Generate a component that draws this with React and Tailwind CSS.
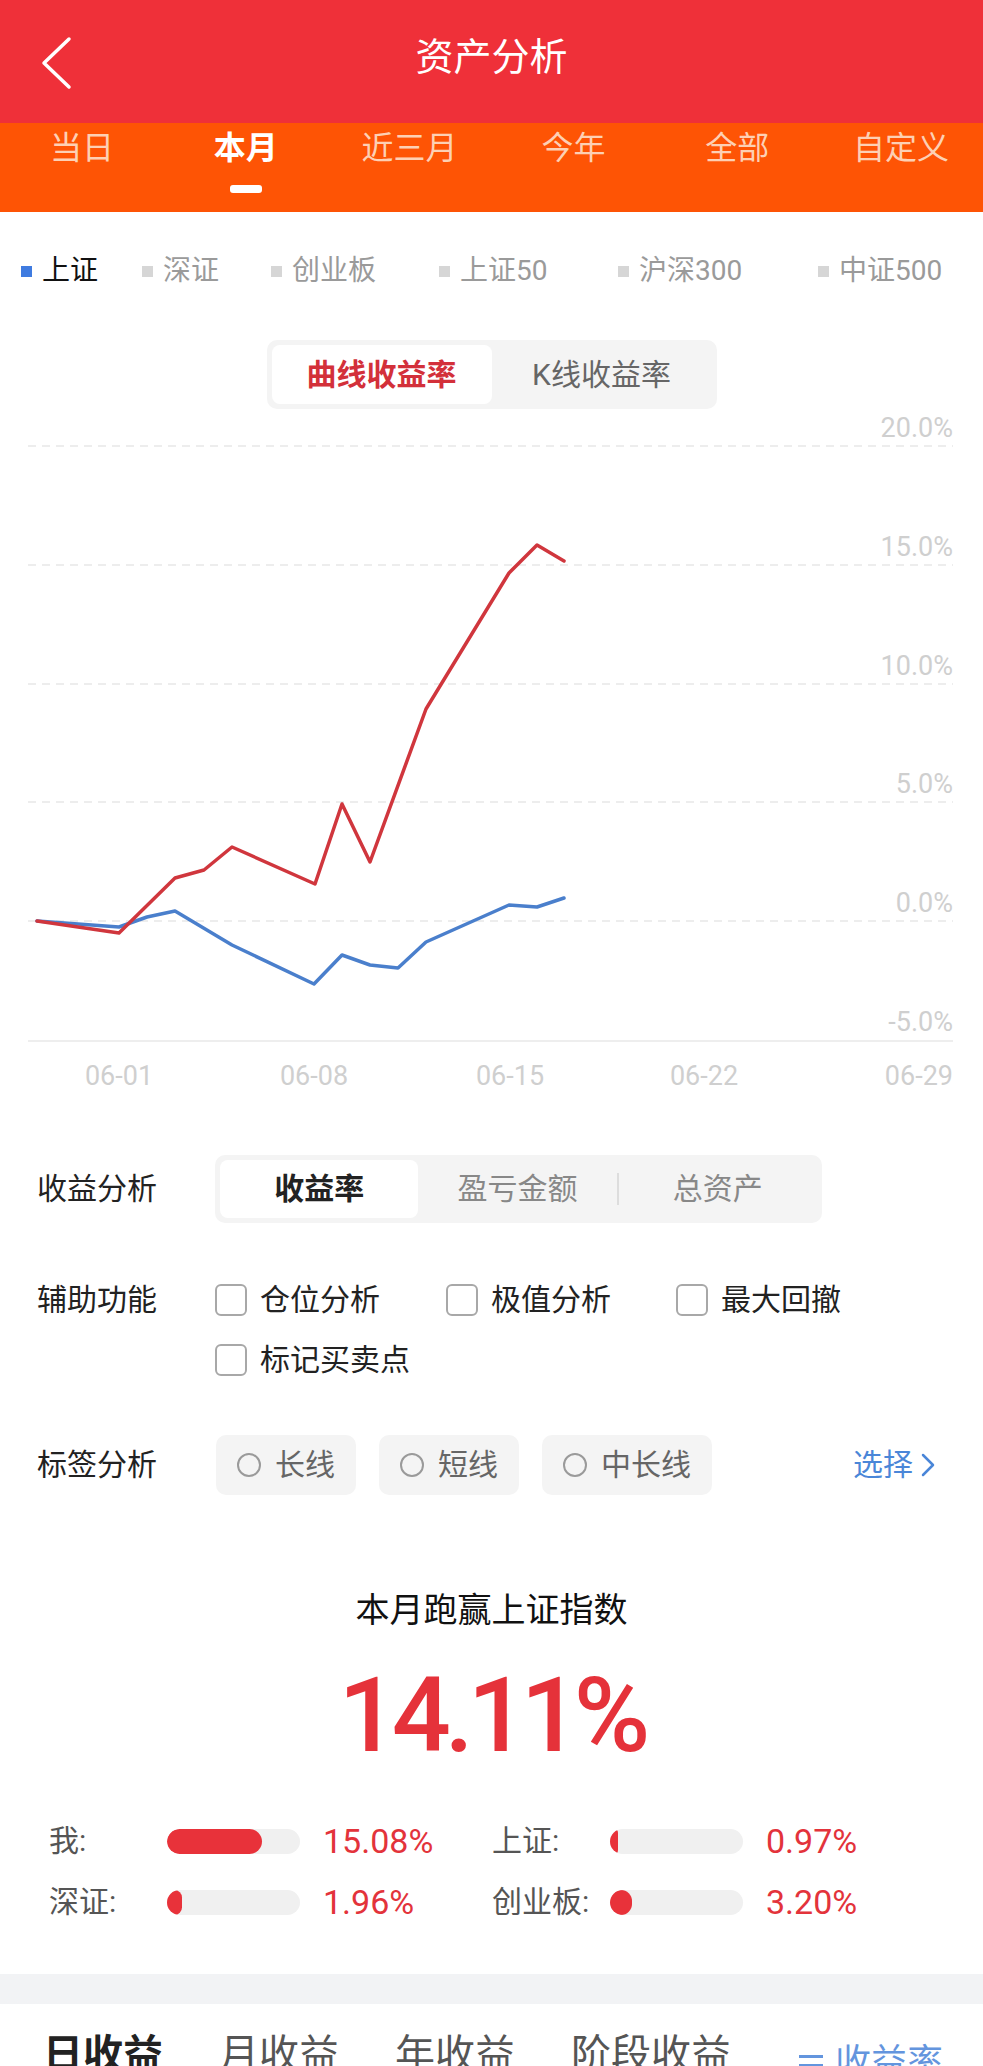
import { useState } from "react"

const periods = ["当日", "本月", "近三月", "今年", "全部", "自定义"]

const indexes = [
  { name: "上证", w: "w-[121px]", on: true },
  { name: "深证", w: "w-[129px]" },
  { name: "创业板", w: "w-[168px]" },
  { name: "上证50", w: "w-[179px]" },
  { name: "沪深300", w: "w-[200px]" },
  { name: "中证500", w: "" },
]

// points in page coordinates, chart svg starts at y=405
const TOP = 405
const redPts = [[37,921],[119,933],[175,878],[204,870],[232,847],[315,884],[342,804],[370,862],[426,709],[509,573],[537,545],[564,561]]
const bluePts = [[37,921],[119,927],[147,917],[175,911],[232,945],[314,984],[342,955],[370,965],[398,968],[426,942],[509,905],[537,907],[564,898]]

const grid = [
  { y: 446, label: "20.0%" },
  { y: 565, label: "15.0%" },
  { y: 684, label: "10.0%" },
  { y: 802, label: "5.0%" },
  { y: 921, label: "0.0%" },
]

const toPath = (pts) => pts.map(([x, y]) => `${x},${y - TOP}`).join(" ")

function Chart() {
  return (
    <svg width="983" height="690" viewBox="0 0 983 690" className="block mt-[-4px]">
      {grid.map(g => (
        <g key={g.label}>
          <line x1="28" x2="953" y1={g.y - TOP} y2={g.y - TOP} stroke="#e8e8e8" strokeWidth="1.5" strokeDasharray="8 6" />
          <text x="953" y={g.y - TOP - 9} textAnchor="end" fontSize="27" fill="#cfcfcf" fontFamily="Roboto, sans-serif">{g.label}</text>
        </g>
      ))}
      <text x="953" y={1031 - TOP} textAnchor="end" fontSize="27" fill="#cfcfcf" fontFamily="Roboto, sans-serif">-5.0%</text>
      <line x1="28" x2="953" y1={1041 - TOP} y2={1041 - TOP} stroke="#e8e8e8" strokeWidth="1.5" />
      {[["06-01", 119], ["06-08", 314], ["06-15", 510], ["06-22", 704]].map(([t, x]) => (
        <text key={t} x={x} y={1085 - TOP} textAnchor="middle" fontSize="27" fill="#cfcfcf" fontFamily="Roboto, sans-serif">{t}</text>
      ))}
      <text x="953" y={1085 - TOP} textAnchor="end" fontSize="27" fill="#cfcfcf" fontFamily="Roboto, sans-serif">06-29</text>
      <polyline points={toPath(bluePts)} fill="none" stroke="#4a7fcc" strokeWidth="3.5" strokeLinejoin="round" strokeLinecap="round" />
      <polyline points={toPath(redPts)} fill="none" stroke="#d0363d" strokeWidth="3.5" strokeLinejoin="round" strokeLinecap="round" />
    </svg>
  )
}

function Checkbox({ label }) {
  return (
    <div className="flex items-center gap-[13px] h-[60px]">
      <div className="w-[32px] h-[32px] rounded-[6px] border-2 border-[#a8a8a8] bg-white" />
      <span className="text-[30px] leading-none text-[#222]">{label}</span>
    </div>
  )
}

function Stat({ label, value, fill }) {
  return (
    <div className="flex items-center h-[50px]">
      <span className="w-[118px] text-[30px] leading-none text-[#555]">{label}</span>
      <div className="w-[133px] h-[25px] rounded-full bg-[#f0f0f0] overflow-hidden">
        <div className="h-full rounded-full bg-[#e8323a]" style={{ width: fill }} />
      </div>
      <span className="ml-[23px] text-[34px] leading-none text-[#e3333b]">{value}</span>
    </div>
  )
}

export default function App() {
  const [period, setPeriod] = useState(1)
  const [mode, setMode] = useState(0)

  return (
    <div className="w-full h-[2066px] overflow-hidden bg-white font-['Roboto','Noto_Sans_CJK_SC',sans-serif]">
      {/* header */}
      <div className="relative h-[123px] bg-[#ef3039] flex items-center justify-center pb-[10px]">
        <svg width="32" height="54" viewBox="0 0 32 54" className="absolute left-[41px] top-[36px]">
          <polyline points="28,3 3,27 28,51" fill="none" stroke="white" strokeWidth="3.5" strokeLinecap="round" strokeLinejoin="round" />
        </svg>
        <h1 className="text-[38px] leading-none text-white">资产分析</h1>
      </div>

      {/* period tabs */}
      <div className="h-[89px] bg-[#fe5405] flex">
        {periods.map((p, i) => (
          <button key={p} onClick={() => setPeriod(i)} className="flex-1 flex flex-col items-center pt-[9px]">
            <span className={`text-[32px] leading-none ${period === i ? "text-white font-bold" : "text-[#fdd0b4]"}`}>{p}</span>
            {period === i && <span className="mt-[21px] w-[32px] h-[8px] rounded-[3px] bg-white" />}
          </button>
        ))}
      </div>

      {/* index legend */}
      <div className="h-[118px] flex items-center pl-[21px]">
        {indexes.map(ix => (
          <div key={ix.name} className={`flex items-center gap-[10px] ${ix.w}`}>
            <span className={`w-[11px] h-[11px] ${ix.on ? "bg-[#3f7be0]" : "bg-[#d6d6d6]"}`} />
            <span className={`text-[28px] leading-none ${ix.on ? "text-[#111]" : "text-[#9a9a9a]"}`}>{ix.name}</span>
          </div>
        ))}
      </div>

      {/* chart mode */}
      <div className="mt-[10px] mx-auto w-[450px] h-[69px] rounded-[10px] bg-[#f4f4f4] p-[5px] flex">
        {["曲线收益率", "K线收益率"].map((m, i) => (
          <button key={m} onClick={() => setMode(i)}
            className={`flex-1 rounded-[8px] text-[30px] leading-none ${mode === i ? "bg-white text-[#d3303a] font-bold" : "text-[#666]"}`}>
            {m}
          </button>
        ))}
      </div>

      <Chart />

      {/* 收益分析 */}
      <div className="mt-[60px] flex items-center">
        <span className="w-[215px] pl-[37px] text-[30px] leading-none text-[#222]">收益分析</span>
        <div className="w-[607px] h-[68px] rounded-[10px] bg-[#f4f4f4] p-[5px] flex items-center">
          <div className="w-[199px] h-full rounded-[8px] bg-white flex items-center justify-center text-[30px] leading-none font-bold text-[#222]">收益率</div>
          <div className="w-[199px] flex items-center justify-center text-[30px] leading-none text-[#888]">盈亏金额</div>
          <div className="w-[2px] h-[32px] bg-[#dddddd]" />
          <div className="w-[199px] flex items-center justify-center text-[30px] leading-none text-[#888]">总资产</div>
        </div>
      </div>

      {/* 辅助功能 */}
      <div className="mt-[47px] flex">
        <span className="w-[215px] pl-[37px] h-[60px] flex items-center text-[30px] leading-none text-[#222]">辅助功能</span>
        <div className="grid grid-cols-[231px_230px_200px]">
          <Checkbox label="仓位分析" />
          <Checkbox label="极值分析" />
          <Checkbox label="最大回撤" />
          <Checkbox label="标记买卖点" />
        </div>
      </div>

      {/* 标签分析 */}
      <div className="mt-[45px] flex items-center pr-[48px]">
        <span className="w-[216px] pl-[37px] text-[30px] leading-none text-[#222]">标签分析</span>
        <div className="flex gap-[23px]">
          {["长线", "短线", "中长线"].map(t => (
            <div key={t} className="h-[60px] px-[21px] rounded-[10px] bg-[#f4f4f4] flex items-center gap-[14px]">
              <span className="w-[24px] h-[24px] rounded-full border-2 border-[#9a9a9a]" />
              <span className="text-[30px] leading-none text-[#666]">{t}</span>
            </div>
          ))}
        </div>
        <div className="ml-auto flex items-center gap-[8px] text-[30px] leading-none text-[#4a86d8]">
          选择
          <svg width="14" height="24" viewBox="0 0 14 24">
            <polyline points="2,2 12,12 2,22" fill="none" stroke="#4a86d8" strokeWidth="2.5" strokeLinecap="round" strokeLinejoin="round" />
          </svg>
        </div>
      </div>

      {/* summary */}
      <div className="mt-[95px] text-center text-[34px] leading-[40px] font-normal text-[#111]">本月跑赢上证指数</div>
      <div className="mt-[34px] text-center text-[104px] leading-none font-medium tracking-[-6px] text-[#e5323a]">14.11%</div>

      <div className="mt-[48px] pl-[49px] grid grid-cols-[443px_443px] gap-y-[11px]">
        <Stat label="我:" value="15.08%" fill="95px" />
        <Stat label="上证:" value="0.97%" fill="8px" />
        <Stat label="深证:" value="1.96%" fill="15px" />
        <Stat label="创业板:" value="3.20%" fill="22px" />
      </div>

      <div className="mt-[47px] h-[30px] bg-[#f2f3f5]" />

      {/* bottom tabs */}
      <div className="mt-[31px] flex items-start pl-[43px] pr-[40px] gap-[56px]">
        <span className="text-[40px] leading-none font-bold text-[#222]">日收益</span>
        <span className="text-[40px] leading-none text-[#555]">月收益</span>
        <span className="text-[40px] leading-none text-[#555]">年收益</span>
        <span className="text-[40px] leading-none text-[#555]">阶段收益</span>
        <div className="ml-auto flex items-start gap-[10px] text-[36px] leading-none text-[#3d7bd6] opacity-80">
          <svg width="28" height="30" viewBox="0 0 28 30" className="mt-[16px]">
            <rect x="2" y="4" width="24" height="3" fill="#3d7bd6" />
            <rect x="2" y="13" width="24" height="3" fill="#3d7bd6" />
            <rect x="2" y="22" width="24" height="3" fill="#3d7bd6" />
          </svg>
          <span className="mt-[10px]">收益率</span>
        </div>
      </div>
    </div>
  )
}
